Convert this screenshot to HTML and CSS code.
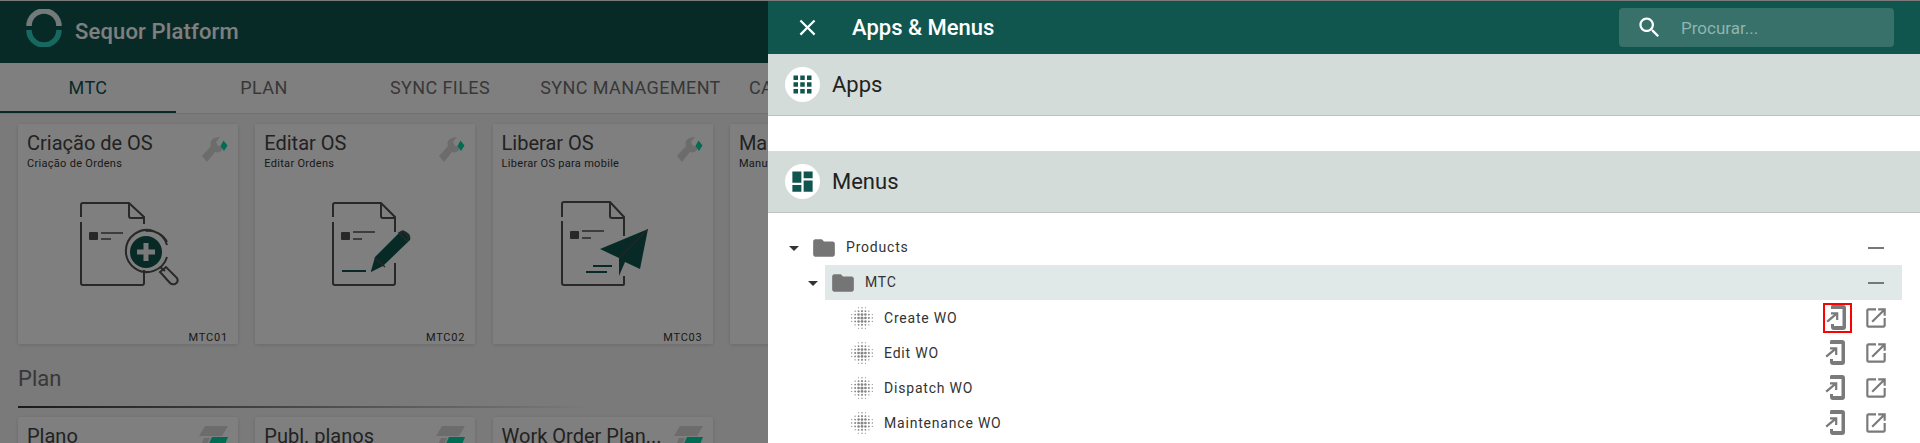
FILE: index.html
```html
<!DOCTYPE html>
<html lang="en">
<head>
  <meta charset="UTF-8">
  <title>Sequor Platform</title>
  <link rel="stylesheet" href="styles.css">
</head>
<body>

  <svg class="defs" width="0" height="0">
    <symbol id="dots" viewBox="-10.500 -10.500 21 21">
      <g>
        <circle cx="-3" cy="-9" r=".5"/><circle cx="0" cy="-9" r=".6"/><circle cx="3" cy="-9" r=".5"/>
        <circle cx="-3" cy="9" r=".5"/><circle cx="0" cy="9" r=".6"/><circle cx="3" cy="9" r=".5"/>
        <circle cx="-9" cy="-3" r=".5"/><circle cx="-9" cy="0" r=".6"/><circle cx="-9" cy="3" r=".5"/>
        <circle cx="9" cy="-3" r=".5"/><circle cx="9" cy="0" r=".6"/><circle cx="9" cy="3" r=".5"/>
        <circle cx="-6" cy="-6" r=".6"/><circle cx="-3" cy="-6" r=".8"/><circle cx="0" cy="-6" r=".9"/><circle cx="3" cy="-6" r=".8"/><circle cx="6" cy="-6" r=".6"/>
        <circle cx="-6" cy="6" r=".6"/><circle cx="-3" cy="6" r=".8"/><circle cx="0" cy="6" r=".9"/><circle cx="3" cy="6" r=".8"/><circle cx="6" cy="6" r=".6"/>
        <circle cx="-6" cy="-3" r=".8"/><circle cx="-3" cy="-3" r="1.100"/><circle cx="0" cy="-3" r="1.200"/><circle cx="3" cy="-3" r="1.100"/><circle cx="6" cy="-3" r=".8"/>
        <circle cx="-6" cy="0" r=".9"/><circle cx="-3" cy="0" r="1.200"/><circle cx="0" cy="0" r="1.400"/><circle cx="3" cy="0" r="1.200"/><circle cx="6" cy="0" r=".9"/>
        <circle cx="-6" cy="3" r=".8"/><circle cx="-3" cy="3" r="1.100"/><circle cx="0" cy="3" r="1.200"/><circle cx="3" cy="3" r="1.100"/><circle cx="6" cy="3" r=".8"/>
      </g>
    </symbol>
    <symbol id="to-mobile" viewBox="0 0 28 30">
      <path d="M8 2H19a3 3 0 0 1 3 3V24a3 3 0 0 1-3 3H10a3 3 0 0 1-3-3V21H10V23H18.500V6H7V4a2 2 0 0 1 1-2z"/>
      <path d="M3.200 18.700L13 10.300M7 10.300H13.200V17" fill="none" stroke="#7a7a7a" stroke-width="2.200"/>
    </symbol>
    <symbol id="new-window" viewBox="0 0 24 24">
      <path d="M19 19H5V5h7V3H5c-1.110 0-2 .9-2 2v14c0 1.100.89 2 2 2h14c1.100 0 2-.9 2-2v-7h-2v7zM14 3v2h3.590l-9.830 9.830 1.410 1.410L19 6.410V10h2V3h-7z"/>
    </symbol>
    <symbol id="folder" viewBox="0 0 24 24">
      <path d="M10 4H4c-1.100 0-1.990.9-1.990 2L2 18c0 1.100.9 2 2 2h16c1.100 0 2-.9 2-2V8c0-1.100-.9-2-2-2h-8l-2-2z"/>
    </symbol>
    <symbol id="caret" viewBox="0 0 24 24"><path d="M7 10l5 5 5-5z"/></symbol>
    <symbol id="wrench" viewBox="0 0 26 26">
      <path class="badge-gray" d="M0 20L9 10C7 5 11 1 18 1L14 6L16 10L20 10L22 8C22 13 18 18 13 16L5 26z"/>
      <path class="badge-green" d="M21.500 4.500L25.500 9.500L22 15L18.500 10z"/>
    </symbol>
    <symbol id="stripes" viewBox="0 0 30 26">
      <path class="badge-gray" d="M7 0H30L24 10H1z"/>
      <path class="badge-gray" d="M6 12H12L5 26H0z"/>
      <path class="badge-green" d="M14 11H30L24 26H7z"/>
    </symbol>
  </svg>

  <header class="topbar">
    <svg class="logo" width="38" height="38" viewBox="-19 -19 38 38">
      <path class="logo-top" d="M-15 -2A15 15 0 0 1 15 -2"/>
      <path class="logo-bottom" d="M-15 2A15 15 0 0 0 15 2"/>
    </svg>
    <span class="brand">Sequor Platform</span>
  </header>

  <nav class="tabs">
    <a class="tab tab-active">MTC</a>
    <a class="tab">PLAN</a>
    <a class="tab">SYNC FILES</a>
    <a class="tab tab-wide">SYNC MANAGEMENT</a>
    <a class="tab tab-last">CADASTROS</a>
  </nav>

  <main class="content">
    <section class="cards">
      <article class="card">
        <svg class="badge"><use href="#wrench"/></svg>
        <h3>Criação de OS</h3>
        <p>Criação de Ordens</p>
        <svg class="art art-create" width="120" height="100" viewBox="0 0 120 100">
          <path class="doc" d="M11 22V10Q11 8 13 8H59L74 22V29M74 75V88Q74 90 72 90H13Q11 90 11 88V27M59 8V21Q59 23 61 23H74"/>
          <rect class="art-ink" x="19" y="37" width="9" height="8" rx="1"/>
          <path class="doc thin" d="M31 38H53M31 44H41"/>
          <path class="doc" d="M97 50A21 21 0 1 0 97 62M76 36A21 21 0 0 1 97 47"/>
          <circle class="art-teal" cx="76" cy="57" r="16"/>
          <path class="plus" d="M76 48V66M67 57H85"/>
          <path class="doc" d="M90 72L95 76M90 77L96 72L107 83Q109 87 105 89Q102 90 100 88L91 78z"/>
        </svg>
        <span class="code">MTC01</span>
      </article>
      <article class="card">
        <svg class="badge"><use href="#wrench"/></svg>
        <h3>Editar OS</h3>
        <p>Editar Ordens</p>
        <svg class="art art-edit" width="120" height="100" viewBox="0 0 120 100">
          <path class="doc" d="M12 22V10Q12 8 14 8H60L74 22V37M74 68V88Q74 90 72 90H14Q12 90 12 88V27M60 8V21Q60 23 62 23H74"/>
          <rect class="art-ink" x="20" y="37" width="9" height="8" rx="1"/>
          <path class="doc thin" d="M32 37H54M32 44H41"/>
          <path class="teal-line" d="M21 76H45"/>
          <path class="art-teal" d="M50 76L54 62L80 36Q84 35 88 39Q90 42 89 45L62 71L50 77z"/>
          <path class="pencil-mark" d="M54 63L64 72M78 38L82 36L88 42L86 46z"/>
        </svg>
        <span class="code">MTC02</span>
      </article>
      <article class="card">
        <svg class="badge"><use href="#wrench"/></svg>
        <h3>Liberar OS</h3>
        <p>Liberar OS para mobile</p>
        <svg class="art art-send" width="120" height="100" viewBox="0 0 120 100">
          <path class="doc" d="M7 22V9Q7 7 9 7H55L69 22V41M69 81V89Q69 90 67 90H9Q7 90 7 88V26M55 7V21Q55 23 57 23H69"/>
          <rect class="art-ink" x="15" y="36" width="9" height="8" rx="1"/>
          <path class="doc thin" d="M27 36H49M27 43H36"/>
          <path class="teal-line" d="M38 71H57M31 77H52"/>
          <path class="art-teal" d="M45 54L93 34L85 74L70 67L64 81V63z"/>
          <path class="plane-fold" d="M64 63L93 34"/>
        </svg>
        <span class="code">MTC03</span>
      </article>
      <article class="card">
        <h3>Manutenção</h3>
        <p>Manutenção de Ordens</p>
      </article>
    </section>

    <h2 class="section-title">Plan</h2>
    <div class="section-line"></div>

    <section class="cards">
      <article class="card">
        <svg class="badge badge-plan"><use href="#stripes"/></svg>
        <h3>Plano</h3>
      </article>
      <article class="card">
        <svg class="badge badge-plan"><use href="#stripes"/></svg>
        <h3>Publ. planos</h3>
      </article>
      <article class="card">
        <svg class="badge badge-plan"><use href="#stripes"/></svg>
        <h3>Work Order Plan...</h3>
      </article>
    </section>
  </main>

  <div class="scrim"></div>

  <aside class="drawer">
    <div class="drawer-head">
      <svg class="close" viewBox="0 0 24 24"><path d="M19 6.410L17.590 5 12 10.590 6.410 5 5 6.410 10.590 12 5 17.590 6.410 19 12 13.410 17.590 19 19 17.590 13.410 12z"/></svg>
      <h1>Apps &amp; Menus</h1>
      <div class="search">
        <svg viewBox="0 0 24 24"><path d="M15.500 14h-.79l-.28-.27C15.410 12.590 16 11.110 16 9.500 16 5.910 13.090 3 9.500 3S3 5.910 3 9.500 5.910 16 9.500 16c1.610 0 3.090-.59 4.230-1.570l.27.28v.79l5 4.990L20.490 19l-4.990-5zm-6 0C7.010 14 5 11.990 5 9.500S7.010 5 9.500 5 14 7.010 14 9.500 11.990 14 9.500 14z"/></svg>
        <span>Procurar...</span>
      </div>
    </div>

    <div class="group-bar">
      <span class="group-icon"><svg viewBox="0 0 24 24"><path d="M4 8h4V4H4v4zm6 12h4v-4h-4v4zm-6 0h4v-4H4v4zm0-6h4v-4H4v4zm6 0h4v-4h-4v4zm6-10v4h4V4h-4zm-6 4h4V4h-4v4zm6 6h4v-4h-4v4zm0 6h4v-4h-4v4z"/></svg></span>
      Apps
    </div>
    <div class="group-empty"></div>
    <div class="group-bar">
      <span class="group-icon"><svg viewBox="0 0 24 24"><path d="M3 13h8V3H3v10zm0 8h8v-6H3v6zm10 0h8V11h-8v10zm0-18v6h8V3h-8z"/></svg></span>
      Menus
    </div>

    <div class="tree">
      <div class="tree-row">
        <svg class="caret"><use href="#caret"/></svg>
        <div class="node">
          <svg class="folder"><use href="#folder"/></svg>
          <span class="node-name">Products</span>
          <span class="action"><i class="minus"></i></span>
        </div>
      </div>
      <div class="tree-row level-2">
        <svg class="caret"><use href="#caret"/></svg>
        <div class="node node-open">
          <svg class="folder"><use href="#folder"/></svg>
          <span class="node-name">MTC</span>
          <span class="action"><i class="minus"></i></span>
        </div>
      </div>
      <div class="leaf">
        <svg class="dots"><use href="#dots"/></svg>
        <span class="node-name">Create WO</span>
        <span class="action action-marked"><svg class="mobile-icon"><use href="#to-mobile"/></svg></span>
        <span class="action"><svg class="open-icon"><use href="#new-window"/></svg></span>
      </div>
      <div class="leaf">
        <svg class="dots"><use href="#dots"/></svg>
        <span class="node-name">Edit WO</span>
        <span class="action action-first"><svg class="mobile-icon"><use href="#to-mobile"/></svg></span>
        <span class="action"><svg class="open-icon"><use href="#new-window"/></svg></span>
      </div>
      <div class="leaf">
        <svg class="dots"><use href="#dots"/></svg>
        <span class="node-name">Dispatch WO</span>
        <span class="action action-first"><svg class="mobile-icon"><use href="#to-mobile"/></svg></span>
        <span class="action"><svg class="open-icon"><use href="#new-window"/></svg></span>
      </div>
      <div class="leaf">
        <svg class="dots"><use href="#dots"/></svg>
        <span class="node-name">Maintenance WO</span>
        <span class="action action-first"><svg class="mobile-icon"><use href="#to-mobile"/></svg></span>
        <span class="action"><svg class="open-icon"><use href="#new-window"/></svg></span>
      </div>
    </div>
  </aside>

</body>
</html>
```

FILE: styles.css
```css
html, body {
  height: 100%;
  margin: 0;
  overflow: hidden;
}

body {
  font-family: Roboto, "Liberation Sans", sans-serif;
  background-color: #f5f5f5;
  color: #333;
  padding-top: 1px;
  box-sizing: border-box;
}

.defs {
  position: absolute;
}

/* Page behind the drawer */
.topbar {
  display: flex;
  align-items: center;
  height: 62px;
  padding-left: 25px;
  background-color: #11554f;
}

.logo {
  flex: none;
  align-self: flex-start;
  margin-top: 8px;
}

.logo-top, .logo-bottom {
  fill: none;
  stroke-width: 5.500;
}

.logo-top {
  stroke: #e4f4f4;
}

.logo-bottom {
  stroke: #31d0c4;
}

.brand {
  margin-left: 12px;
  padding-bottom: 1px;
  color: #fff;
  font-size: 22px;
  font-weight: 500;
  letter-spacing: .15px;
}

.tabs {
  display: flex;
  height: 51px;
  background-color: #fff;
  border-bottom: 1px solid #e0e0e0;
  box-sizing: border-box;
  white-space: nowrap;
}

.tab {
  flex: none;
  width: 176px;
  line-height: 50px;
  text-align: center;
  font-size: 18px;
  letter-spacing: .4px;
  color: #707070;
}

.tab-wide {
  width: 205px;
  margin-right: 16px;
}

.tab-last {
  width: auto;
}

.tab-active {
  color: #11554f;
  box-shadow: inset 0 -2px 0 #11554f;
}

.content {
  padding: 10px 18px 0;
}

.cards {
  display: grid;
  grid-template-columns: repeat(4, 220px);
  column-gap: 17.3px;
}

.card {
  position: relative;
  display: flex;
  flex-direction: column;
  height: 220px;
  padding: 8px 8px 0 9px;
  box-sizing: border-box;
  background-color: #fff;
  border-radius: 2px;
  box-shadow: 0 1px 4px rgba(0, 0, 0, .14);
}

.card h3 {
  margin: 0;
  font-size: 20px;
  font-weight: 400;
  line-height: 22px;
  color: #444;
  white-space: nowrap;
}

.card p {
  margin: 3px 0 0;
  font-size: 11px;
  line-height: 14px;
  letter-spacing: .3px;
  color: #333;
  white-space: nowrap;
}

.badge {
  position: absolute;
  top: 12px;
  right: 10px;
  width: 26px;
  height: 26px;
}

.badge-plan {
  top: 9px;
  width: 30px;
}

.badge-gray {
  fill: #d8d8d8;
}

.badge-green {
  fill: #00d8a8;
}

.art {
  margin-top: 24px;
}

.art-create {
  margin-left: 43px;
}

.art-edit {
  margin-left: 57px;
}

.art-send {
  margin-left: 53px;
}

.doc {
  fill: none;
  stroke: #505050;
  stroke-width: 2;
}

.thin {
  stroke-width: 1.500;
}

.art-ink {
  fill: #505050;
}

.art-teal {
  fill: #11554f;
}

.plus {
  fill: none;
  stroke: #f5f5f5;
  stroke-width: 5;
}

.teal-line {
  fill: none;
  stroke: #11554f;
  stroke-width: 2;
}

.pencil-mark {
  fill: none;
  stroke: #505050;
  stroke-width: 1.500;
}

.plane-fold {
  fill: none;
  stroke: #505050;
  stroke-width: 1;
}

.code {
  margin-top: auto;
  align-self: flex-end;
  padding-right: 2px;
  font-size: 11px;
  line-height: 12px;
  letter-spacing: .8px;
  color: #333;
}

.section-title {
  margin: 20px 0 0;
  font-size: 22px;
  font-weight: 400;
  line-height: 30px;
  color: #707070;
}

.section-line {
  width: 572px;
  height: 2px;
  margin: 12px 0 9px;
  background: linear-gradient(to right, #333, transparent);
}

.scrim {
  position: fixed;
  top: 0;
  left: 0;
  right: 0;
  bottom: 0;
  background-color: rgba(0, 0, 0, .5);
}

/* Drawer */
.drawer {
  position: fixed;
  top: 1px;
  right: 0;
  bottom: 0;
  width: 1152px;
  background-color: #fff;
}

.drawer-head {
  display: flex;
  align-items: center;
  height: 53px;
  padding-right: 26px;
  background-color: #11554f;
  color: #fff;
}

.close {
  width: 27px;
  height: 27px;
  margin-left: 26px;
  fill: #fff;
}

.drawer-head h1 {
  margin: 0 0 0 31px;
  flex: 1;
  font-size: 22px;
  font-weight: 500;
}

.search {
  display: flex;
  align-items: center;
  width: 275px;
  height: 39px;
  background-color: #38706a;
  border-radius: 4px;
  font-size: 17px;
  color: #8fb5b0;
}

.search svg {
  width: 27px;
  height: 27px;
  margin-left: 17px;
  fill: #fff;
}

.search span {
  margin-left: 18px;
}

.group-bar {
  display: flex;
  align-items: center;
  height: 62px;
  padding-left: 17px;
  box-sizing: border-box;
  background-color: #d4dcd9;
  border-bottom: 1px solid #bdc3c1;
  font-size: 22px;
  color: #222;
}

.group-icon {
  display: flex;
  align-items: center;
  justify-content: center;
  width: 35px;
  height: 35px;
  margin-right: 12px;
  background-color: #fff;
  border-radius: 50%;
}

.group-icon svg {
  width: 27px;
  height: 27px;
  fill: #11554f;
}

.group-empty {
  height: 35px;
}

.tree {
  padding: 17px 18px 0 14px;
}

.tree-row {
  display: flex;
  align-items: center;
  height: 35px;
}

.level-2 {
  padding-left: 19px;
}

.caret {
  flex: none;
  width: 24px;
  height: 24px;
  fill: #333;
}

.node {
  flex: 1;
  display: flex;
  align-items: center;
  height: 35px;
  padding: 0 12px 0 5px;
}

.node-open {
  background-color: #e0e9e7;
}

.folder {
  flex: none;
  width: 26px;
  height: 26px;
  fill: #757575;
}

.node-name {
  flex: 1;
  margin-left: 9px;
  padding-bottom: 1px;
  font-size: 14px;
  letter-spacing: .8px;
  color: #333;
}

.leaf {
  display: flex;
  align-items: center;
  height: 35px;
  padding: 0 12px 0 68px;
}

.dots {
  flex: none;
  width: 24px;
  height: 24px;
  fill: #858585;
}

.leaf .node-name {
  margin-left: 10px;
  padding-bottom: 0;
}

.action {
  flex: none;
  display: flex;
  align-items: center;
  justify-content: center;
  width: 28px;
  height: 30px;
  box-sizing: border-box;
}

.action-first {
  margin-right: 11px;
}

.action-marked {
  width: 29px;
  margin-right: 10px;
  border: 2px solid #f00;
}

.minus {
  width: 16px;
  height: 2px;
  background-color: #777;
}

.mobile-icon {
  flex: none;
  width: 28px;
  height: 30px;
  fill: #7a7a7a;
}

.open-icon {
  flex: none;
  width: 26px;
  height: 26px;
  fill: #7a7a7a;
}
```
